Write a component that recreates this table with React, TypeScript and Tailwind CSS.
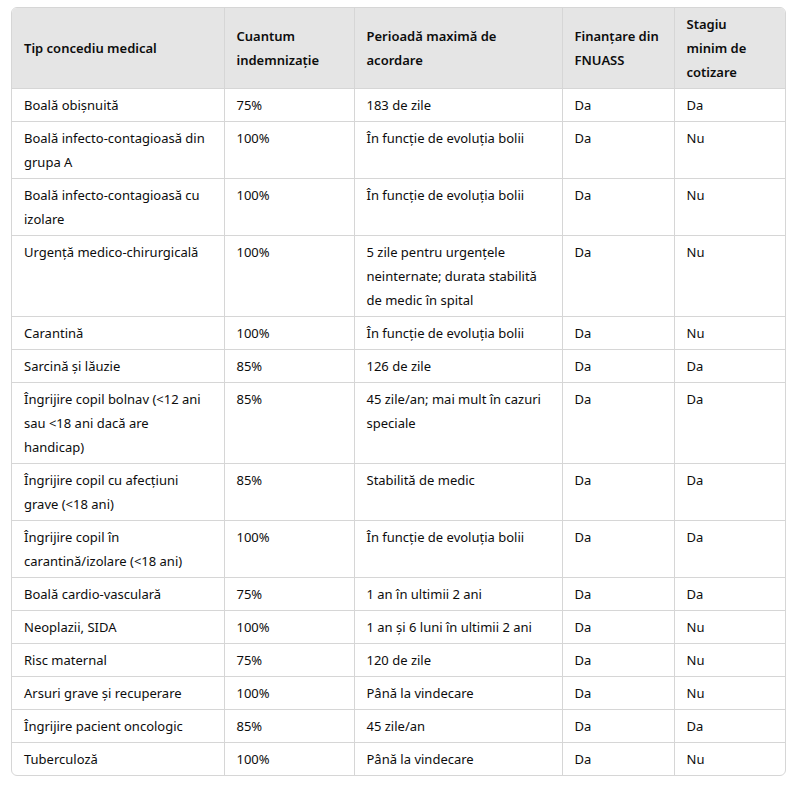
import React from 'react';

type Row = [string, string, string, string, string];

// line breaks are written out so the wrapping matches the source table
const rows: Row[] = [
	['Boală obișnuită', '75%', '183 de zile', 'Da', 'Da'],
	['Boală infecto-contagioasă din\ngrupa A', '100%', 'În funcție de evoluția bolii', 'Da', 'Nu'],
	['Boală infecto-contagioasă cu\nizolare', '100%', 'În funcție de evoluția bolii', 'Da', 'Nu'],
	[
		'Urgență medico-chirurgicală',
		'100%',
		'5 zile pentru urgențele\nneinternate; durata stabilită\nde medic în spital',
		'Da',
		'Nu',
	],
	['Carantină', '100%', 'În funcție de evoluția bolii', 'Da', 'Nu'],
	['Sarcină și lăuzie', '85%', '126 de zile', 'Da', 'Da'],
	[
		'Îngrijire copil bolnav (<12 ani\nsau <18 ani dacă are\nhandicap)',
		'85%',
		'45 zile/an; mai mult în cazuri\nspeciale',
		'Da',
		'Da',
	],
	['Îngrijire copil cu afecțiuni\ngrave (<18 ani)', '85%', 'Stabilită de medic', 'Da', 'Da'],
	['Îngrijire copil în\ncarantină/izolare (<18 ani)', '100%', 'În funcție de evoluția bolii', 'Da', 'Da'],
	['Boală cardio-vasculară', '75%', '1 an în ultimii 2 ani', 'Da', 'Da'],
	['Neoplazii, SIDA', '100%', '1 an și 6 luni în ultimii 2 ani', 'Da', 'Nu'],
	['Risc maternal', '75%', '120 de zile', 'Da', 'Nu'],
	['Arsuri grave și recuperare', '100%', 'Până la vindecare', 'Da', 'Nu'],
	['Îngrijire pacient oncologic', '85%', '45 zile/an', 'Da', 'Da'],
	['Tuberculoză', '100%', 'Până la vindecare', 'Da', 'Nu'],
];

const headers = [
	'Tip concediu medical',
	'Cuantum\nindemnizație',
	'Perioadă maximă de\nacordare',
	'Finanțare din\nFNUASS',
	'Stagiu\nminim de\ncotizare',
];

const widths = ['w-[212px]', 'w-[130px]', 'w-[208px]', 'w-[112px]', 'w-[111px]'];

export default function App() {
	return (
		<div className="min-h-screen bg-white pl-[11px] pt-[7px] font-['Noto_Sans',sans-serif] text-[13px] text-[#0d0d0d]">
			<div className="w-[775px] overflow-hidden rounded-md border border-[#d6d6d6]">
				<table className="w-full table-fixed border-collapse">
					<colgroup>
						{widths.map((w, i) => (
							<col key={i} className={w} />
						))}
					</colgroup>
					<thead>
						<tr className="bg-[#e5e5e5]">
							{headers.map((h, i) => (
								<th
									key={h}
									className={
										'whitespace-pre-line py-1 pl-3 pr-1 text-left align-middle font-semibold leading-6 border-b border-[#d6d6d6] ' +
										(i < 4 ? 'border-r' : '')
									}
								>
									{h}
								</th>
							))}
						</tr>
					</thead>
					<tbody>
						{rows.map((row, r) => (
							<tr key={r}>
								{row.map((cell, i) => (
									<td
										key={i}
										className={
											'whitespace-pre-line py-1 pl-3 pr-1 align-top leading-6 border-[#d6d6d6] ' +
											(r < rows.length - 1 ? 'border-b ' : '') +
											(i < 4 ? 'border-r' : '')
										}
									>
										{cell}
									</td>
								))}
							</tr>
						))}
					</tbody>
				</table>
			</div>
		</div>
	);
}
